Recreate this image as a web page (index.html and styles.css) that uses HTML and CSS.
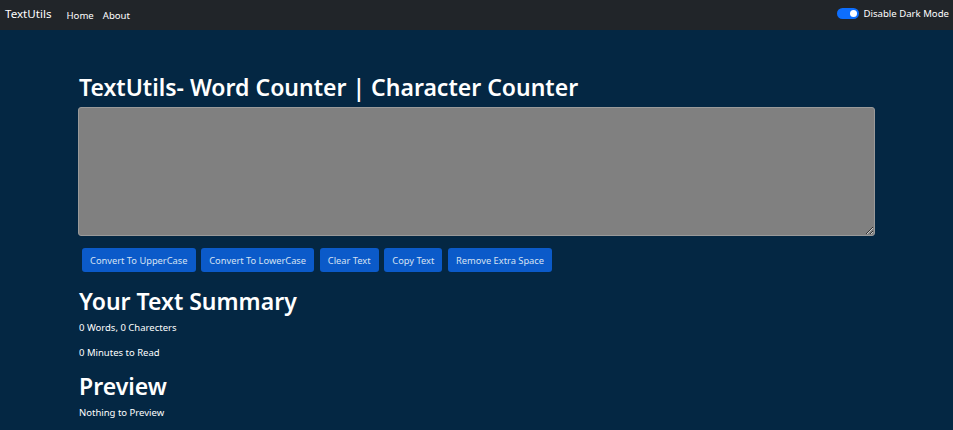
FILE: index.html
```html
<!DOCTYPE html>
<html lang="en">
<head>
<meta charset="utf-8">
<title>TextUtils</title>
<link rel="stylesheet" href="styles.css">
</head>
<body>
<nav class="navbar">
  <a class="brand" href="#">TextUtils</a>
  <ul class="nav-links">
    <li><a href="#">Home</a></li>
    <li><a href="#">About</a></li>
  </ul>
  <label class="switch">
    <span class="switch-track"><span class="switch-knob"></span></span>
    <span class="switch-label">Disable Dark Mode</span>
  </label>
</nav>
<main class="container">
  <h1 class="title">TextUtils- Word Counter | Character Counter</h1>
  <textarea class="text-box" rows="8"></textarea>
  <div class="actions">
    <button class="btn">Convert To UpperCase</button>
    <button class="btn">Convert To LowerCase</button>
    <button class="btn">Clear Text</button>
    <button class="btn">Copy Text</button>
    <button class="btn">Remove Extra Space</button>
  </div>
  <h2 class="section">Your Text Summary</h2>
  <p class="info">0 Words, 0 Charecters</p>
  <p class="info">0 Minutes to Read</p>
  <h2 class="section preview">Preview</h2>
  <p class="info">Nothing to Preview</p>
</main>
</body>
</html>
```
FILE: styles.css
```css
* { box-sizing: border-box; }
html, body { margin: 0; padding: 0; }
body {
  background: #042743;
  color: #fff;
  font-family: "Noto Sans", "Open Sans", sans-serif;
  height: 430px;
  overflow: hidden;
}
.navbar {
  height: 30px;
  background: #212529;
  display: flex;
  align-items: center;
  padding: 0 4px 4px 5px;
}
.brand {
  color: #fff;
  text-decoration: none;
  font-size: 11.6px;
  margin-right: 15px;
}
.nav-links {
  list-style: none;
  margin: 0;
  padding: 0;
  display: flex;
  gap: 9px;
  flex: 1;
}
.nav-links a {
  color: #fff;
  text-decoration: none;
  font-size: 9.6px;
}
.switch {
  display: flex;
  align-items: center;
  gap: 4px;
}
.switch-track {
  width: 22px;
  height: 11px;
  border-radius: 6px;
  background: #0d6efd;
  display: flex;
  align-items: center;
  justify-content: flex-end;
  padding-right: 2px;
}
.switch-knob {
  width: 7px;
  height: 7px;
  border-radius: 50%;
  background: #fff;
}
.switch-label {
  font-size: 9.6px;
  color: #fff;
}
.container {
  width: 797px;
  margin: 0 auto;
  padding-top: 41px;
}
.title {
  font-size: 23px;
  font-weight: 600;
  line-height: 32px;
  margin: 0 0 4px 1px;
}
.text-box {
  display: block;
  width: 100%;
  height: 129px;
  background: #808080;
  border: 1px solid #9a9a9a;
  border-radius: 3px;
  color: #fff;
  margin: 0;
}
.actions {
  display: flex;
  gap: 5.7px;
  margin: 12px 0 0 4px;
}
.btn {
  background: #0b5ac9;
  color: #d6e2f3;
  border: none;
  border-radius: 3px;
  height: 24px;
  padding: 0 8px;
  font-family: inherit;
  font-size: 9.3px;
}
.section {
  font-size: 23px;
  font-weight: 600;
  line-height: 32px;
  margin: 13px 0 3px 1px;
}
.preview { margin-top: 7px; }
.info {
  font-size: 9.5px;
  line-height: 15px;
  margin: 0 0 10px 1px;
}
```
